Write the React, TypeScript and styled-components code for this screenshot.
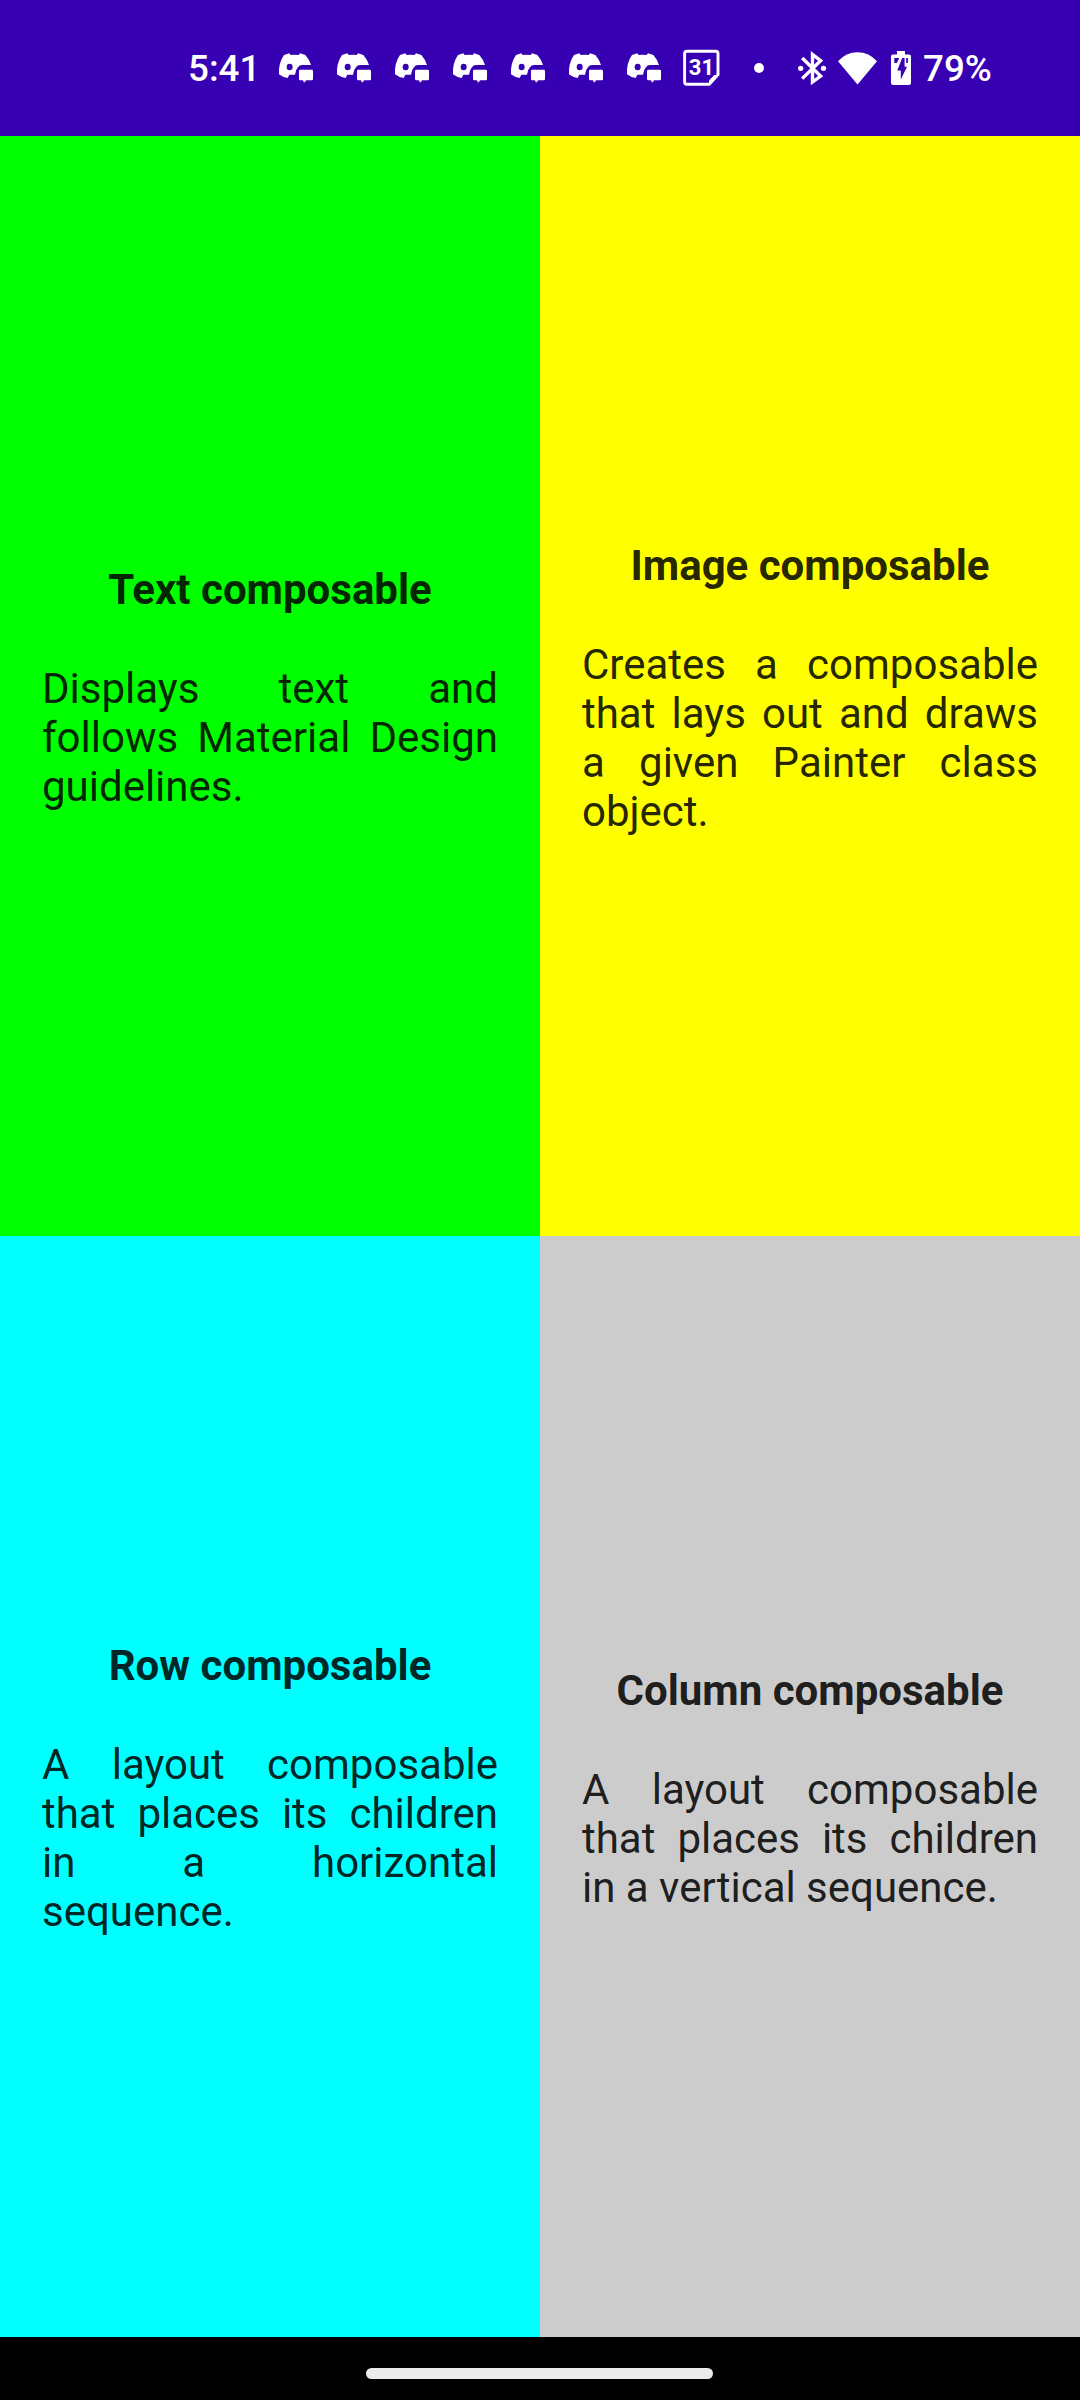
import React from "react";
import styled, { createGlobalStyle } from "styled-components";

const GlobalStyle = createGlobalStyle`
  body {
    margin: 0;
    background: #000;
  }
`;

const Screen = styled.div`
  display: flex;
  flex-direction: column;
  width: 1080px;
  height: 2400px;
  font-family: Roboto, "Noto Sans", sans-serif;
`;

const StatusBar = styled.header`
  display: flex;
  align-items: center;
  box-sizing: border-box;
  height: 136px;
  padding-left: 188px;
  background: #3700b3;
  color: #fff;
`;

const StatusText = styled.span<{ $width: number }>`
  width: ${(p) => p.$width}px;
  padding-top: 2px;
  font-size: 36.75px;
  line-height: 44px;
  font-weight: 500;
  white-space: nowrap;
`;

const Notifications = styled.div`
  display: flex;
  align-items: center;
  gap: 22px;
`;

const Icon = styled.svg`
  display: block;
  flex: none;
  overflow: visible;
`;

const MoreDot = styled.span`
  width: 10px;
  height: 10px;
  margin-left: 34px;
  border-radius: 50%;
  background: #fff;
`;

const SystemIcons = styled.div`
  display: flex;
  align-items: center;
  gap: 12px;
  margin-left: 34px;
`;

const Quadrants = styled.main`
  display: grid;
  grid-template-columns: 1fr 1fr;
  grid-template-rows: 1100px 1101px;
`;

const Card = styled.section<{ $color: string }>`
  display: flex;
  flex-direction: column;
  justify-content: center;
  box-sizing: border-box;
  padding: 4px 42px 0;
  background: ${(p) => p.$color};
  color: rgba(0, 0, 0, 0.87);
`;

const Title = styled.h2`
  margin: 0 0 50px;
  font-size: 42px;
  line-height: 49px;
  font-weight: 700;
  text-align: center;
`;

const Description = styled.p`
  margin: 0;
  font-size: 42px;
  line-height: 49px;
  text-align: justify;
`;

const NavigationBar = styled.footer`
  display: flex;
  justify-content: center;
  align-items: flex-start;
  box-sizing: border-box;
  height: 63px;
  padding: 31px 1px 0 0;
  background: #000;
`;

const HomeHandle = styled.div`
  width: 347px;
  height: 11px;
  border-radius: 5.5px;
  background: #ebebeb;
`;

const ChatIcon = () => (
  <Icon width="36" height="30" viewBox="24 30 108 90" fill="#fff">
    <path
      fillRule="evenodd"
      d="M42 36L58 31L62 36Q74 34 86 36L90 31L106 36Q117 48 123 66L96 66Q88 66 84 73Q77 80 75 95L58 95L53 105Q38 103 27 94Q25 60 42 36ZM59 62A9 10 0 1 0 59 82A9 10 0 1 0 59 62Z"
    />
    <path d="M91 80H125Q129 80 129 84V108Q129 112 125 112H109L102 119L99 112H91Q87 112 87 108V84Q87 80 91 80Z" />
  </Icon>
);

const CalendarIcon = () => (
  <Icon width="36" height="36" viewBox="0 0 36 36">
    <path
      d="M2.8 1.3H31.8Q34 1.3 34 3.5V24.7L25.3 34.2H2.8Q0.6 34.2 0.6 32V3.5Q0.6 1.3 2.8 1.3Z"
      fill="none"
      stroke="#fff"
      strokeWidth="2.9"
    />
    <path d="M25 34.5V30.5L30.3 25H34.5Z" fill="#fff" />
    <text
      x="17.4"
      y="25.4"
      fill="#fff"
      fontFamily="Roboto, sans-serif"
      fontSize="22"
      fontWeight="700"
      textAnchor="middle"
    >
      31
    </text>
  </Icon>
);

const BluetoothIcon = () => (
  <Icon width="28" height="34" viewBox="0 0 28 34">
    <path
      d="M4.2 7L22.6 25L14.5 31V3.4L22.6 9.6L4.2 27.6"
      fill="none"
      stroke="#fff"
      strokeWidth="3.4"
    />
    <circle cx="2.7" cy="17.3" r="2.6" fill="#fff" />
    <circle cx="25.5" cy="17.3" r="2.6" fill="#fff" />
  </Icon>
);

const WifiIcon = () => (
  <Icon width="41" height="33" viewBox="0 0 41 33">
    <path d="M0 9.2Q8 0.2 19.5 0.2T39 9.2L19.5 32.6Z" fill="#fff" />
  </Icon>
);

const BatteryIcon = () => (
  <Icon width="20" height="34" viewBox="0 0 20 34">
    <path
      d="M6 0H14V3.5H18Q20 3.5 20 5.5V32Q20 34 18 34H2Q0 34 0 32V5.5Q0 3.5 2 3.5H6Z"
      fill="#fff"
    />
    <path
      d="M3.3 7H8.3L5.8 12H3.3ZM15.2 7H16.9V12H15.2ZM11.2 7H13.6V15.8H16L9.8 28.5V19.6H6.2Z"
      fill="#3700b3"
    />
  </Icon>
);

const chatNotifications = [0, 1, 2, 3, 4, 5, 6];

const cards = [
  {
    color: "#00ff00",
    title: "Text composable",
    description: "Displays text and follows Material Design guidelines.",
  },
  {
    color: "#ffff00",
    title: "Image composable",
    description:
      "Creates a composable that lays out and draws a given Painter class object.",
  },
  {
    color: "#00ffff",
    title: "Row composable",
    description:
      "A layout composable that places its children in a horizontal sequence.",
  },
  {
    color: "#cccccc",
    title: "Column composable",
    description:
      "A layout composable that places its children in a vertical sequence.",
  },
];

export default function App() {
  return (
    <>
      <GlobalStyle />
      <Screen>
        <StatusBar>
          <StatusText $width={90}>5:41</StatusText>
          <Notifications>
            {chatNotifications.map((id) => (
              <ChatIcon key={id} />
            ))}
            <CalendarIcon />
          </Notifications>
          <MoreDot />
          <SystemIcons>
            <BluetoothIcon />
            <WifiIcon />
            <BatteryIcon />
            <StatusText $width={70}>79%</StatusText>
          </SystemIcons>
        </StatusBar>
        <Quadrants>
          {cards.map((card) => (
            <Card key={card.title} $color={card.color}>
              <Title>{card.title}</Title>
              <Description>{card.description}</Description>
            </Card>
          ))}
        </Quadrants>
        <NavigationBar>
          <HomeHandle />
        </NavigationBar>
      </Screen>
    </>
  );
}
